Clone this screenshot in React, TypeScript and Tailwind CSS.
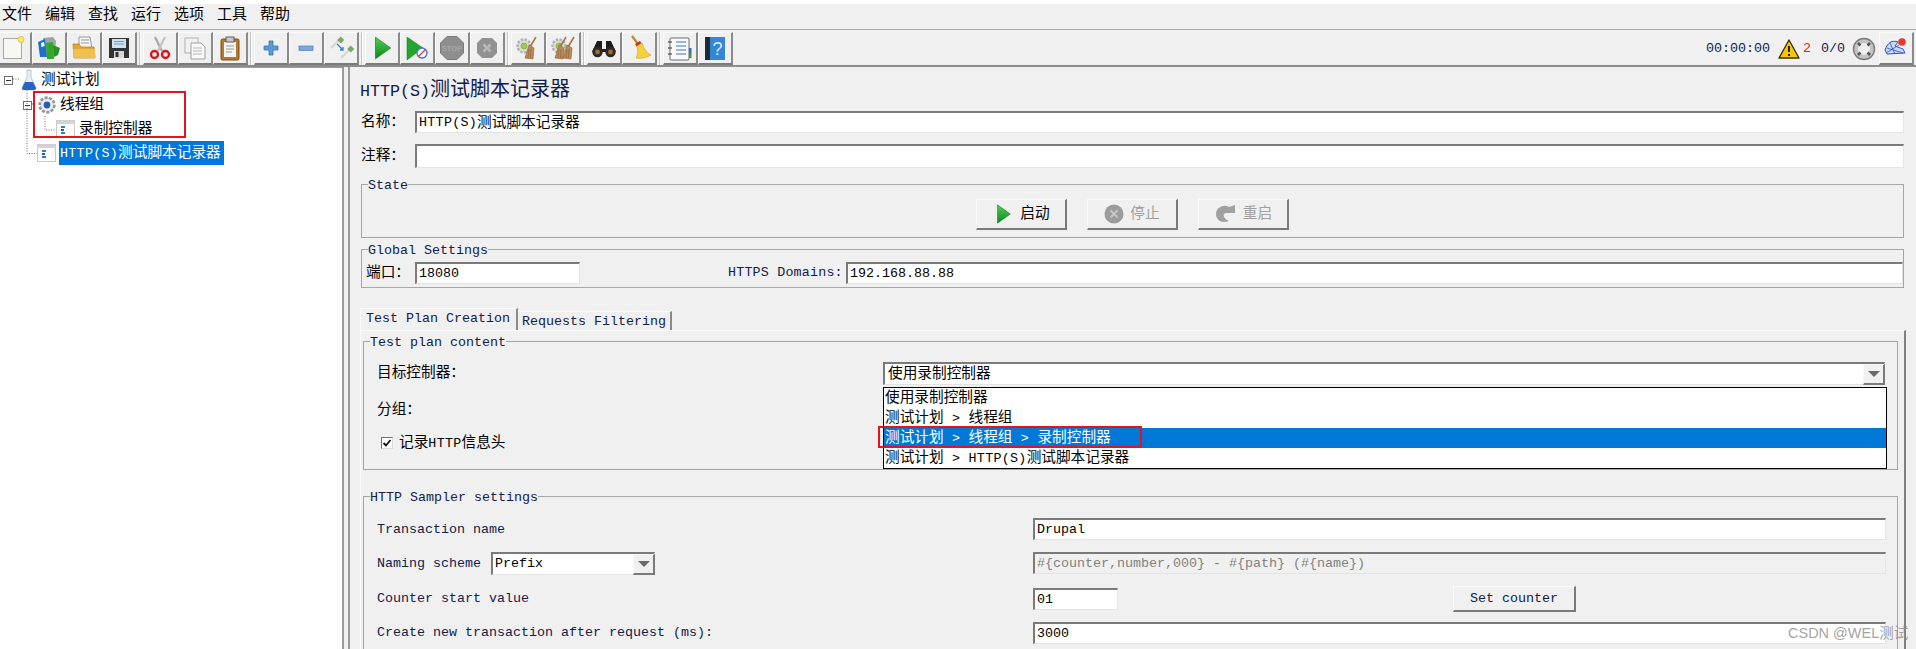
import React from "react";

const Mix = ({ text }: { text: string }) => {
  const parts = text.split(/([\u4e00-\u9fff：]+)/).filter(Boolean);
  const mixed = parts.length > 1;
  return (
    <>
      {parts.map((p, i) =>
        /[\u4e00-\u9fff：]/.test(p) ? (
          <span key={i} className="text-[14.67px]">{p}</span>
        ) : (
          <span key={i} className={"text-[13.33px] whitespace-pre " + (mixed ? "tracking-[0.3px]" : "")}>{p}</span>
        )
      )}
    </>
  );
};

const Play = ({ size = 24 }: { size?: number }) => (
  <svg width={size} height={size} viewBox="0 0 24 24">
    <defs>
      <linearGradient id="pg" x1="0" y1="0" x2="0" y2="1">
        <stop offset="0" stopColor="#4fd04f" />
        <stop offset="1" stopColor="#0b8a1e" />
      </linearGradient>
    </defs>
    <path d="M6 2 L20 12 L6 22 Z" fill="url(#pg)" stroke="#0a7a1a" strokeWidth="0.6" />
  </svg>
);

const Broom = () => (
  <g>
    <path d="M21 2 L15 12" stroke="#a5743c" strokeWidth="1.5" />
    <path d="M14 10 L19 13 L18 24 L10 23 Z" fill="#b98a5a" stroke="#8a6236" strokeWidth="0.6" />
    <path d="M14 14 L13 23 M16 14 L15.5 23" stroke="#8a6236" strokeWidth="0.6" />
  </g>
);

const GearSmall = () => (
  <g>
    <circle cx="9" cy="11" r="6.5" fill="#dcdcdc" stroke="#b0b0b0" strokeWidth="2.4" strokeDasharray="2.4 1.4" />
    <circle cx="9" cy="11" r="3" fill="#9ccc4a" stroke="#7aa030" strokeWidth="0.6" />
  </g>
);

const icons: React.ReactNode[] = [
  <svg key="new" width="26" height="26" viewBox="0 0 26 26">
    <rect x="2.5" y="3.5" width="18" height="20" fill="#f7f7f4" stroke="#a8a8a8" />
    <circle cx="20" cy="4.5" r="3" fill="#f4ea70" stroke="#e2c93a" />
  </svg>,
  <svg key="templates" width="26" height="26" viewBox="0 0 26 26">
    <path d="M7 3 L17 2 L20 6 L19 20 L9 20 Z" fill="#9aa6a8" />
    <path d="M2 7 L9 4 L11 22 L4 22 Z" fill="#1e73c8" />
    <path d="M10 8 L17 7 L18 24 L11 24 Z" fill="#35a829" />
    <path d="M17 10 L24 13 L22 20 L18 22 Z" fill="#2d8f28" />
    <path d="M5 8 L8 7 L8.6 11 L5.5 12 Z" fill="#fff" />
  </svg>,
  <svg key="open" width="26" height="26" viewBox="0 0 26 26">
    <path d="M8 2 L19 2 L21 14 L8 14 Z" fill="#f4f4f4" stroke="#9a9a9a" />
    <path d="M10 5 H18 M10 8 H18" stroke="#9a9a9a" />
    <path d="M2 9 L8 9 L10 12 L23 12 L24 23 L3 23 Z" fill="#e3a72f" stroke="#b37a1a" strokeWidth="0.7" />
    <path d="M2 14 L24 14 L24 23 L3 23 Z" fill="#f0bf50" />
  </svg>,
  <svg key="save" width="26" height="26" viewBox="0 0 26 26">
    <path d="M3 3 H23 V23 H3 Z" fill="#2f3438" />
    <rect x="6" y="4" width="14" height="9" fill="#cfe0ee" />
    <path d="M8 6.5 H18 M8 9 H18" stroke="#7c99b3" />
    <rect x="8" y="16" width="10" height="7" fill="#d8d8d8" />
    <rect x="9.5" y="17" width="3" height="5" fill="#2f3438" />
  </svg>,
  <svg key="cut" width="26" height="26" viewBox="0 0 26 26">
    <path d="M8 2 L15 16" stroke="#a9a9a9" strokeWidth="2.2" />
    <path d="M18 2 L11 16" stroke="#c2c2c2" strokeWidth="2.2" />
    <circle cx="7.5" cy="19.5" r="3.5" fill="none" stroke="#d4161c" strokeWidth="2.4" />
    <circle cx="18.5" cy="19.5" r="3.5" fill="none" stroke="#d4161c" strokeWidth="2.4" />
  </svg>,
  <svg key="copy" width="26" height="26" viewBox="0 0 26 26">
    <rect x="3" y="3" width="13" height="15" fill="#f2f2f2" stroke="#b0b0b0" />
    <path d="M9 8 H19 L23 12 V24 H9 Z" fill="#f8f8f8" stroke="#9f9f9f" />
    <path d="M11 13 H20 M11 16 H20 M11 19 H20" stroke="#b8b8b8" />
  </svg>,
  <svg key="paste" width="26" height="26" viewBox="0 0 26 26">
    <rect x="4" y="4" width="18" height="21" rx="1.5" fill="#b4772e" stroke="#7e4f16" />
    <path d="M7 7 H19 V22 H7 Z" fill="#f4f4f0" />
    <rect x="9" y="2" width="8" height="5" fill="#c8c8c8" stroke="#5f5f5f" />
    <path d="M9 11 H17 M9 14 H17 M9 17 H15" stroke="#9a9a9a" />
  </svg>,
  <svg key="plus" width="26" height="26" viewBox="0 0 26 26">
    <path d="M11 6 H15 V11 H20 V15 H15 V20 H11 V15 H6 V11 H11 Z" fill="#5b9bd8" stroke="#2e6aa8" strokeWidth="0.7" />
  </svg>,
  <svg key="minus" width="26" height="26" viewBox="0 0 26 26">
    <rect x="6" y="11" width="14" height="4.5" fill="#7fa8d6" stroke="#4d7cb0" strokeWidth="0.7" />
  </svg>,
  <svg key="toggle" width="26" height="26" viewBox="0 0 26 26">
    <path d="M3 13 L11 5" stroke="#d8d8d8" strokeWidth="2.4" />
    <rect x="10" y="2" width="5" height="5" fill="#7aa866" transform="rotate(45 12 5)" />
    <path d="M13 23 L21 15" stroke="#d8d8d8" strokeWidth="2.4" />
    <rect x="20" y="11" width="5" height="5" fill="#7aa866" transform="rotate(45 22 14)" />
    <path d="M9 9 L15 15 M15 12 V15 H12" stroke="#2f7fd8" strokeWidth="1.3" fill="none" />
  </svg>,
  <Play key="play" size={26} />,
  <svg key="playno" width="26" height="26" viewBox="0 0 26 26">
    <path d="M3 2 L19 13 L3 25 Z" fill="#24a52e" stroke="#0a7a1a" strokeWidth="0.5" />
    <circle cx="18" cy="18" r="5" fill="#fff" stroke="#3b76d4" strokeWidth="1.3" />
    <path d="M14.5 21.5 L21.5 14.5" stroke="#e0343a" strokeWidth="1.3" />
  </svg>,
  <svg key="stop" width="26" height="26" viewBox="0 0 26 26">
    <path d="M8 1.5 H18 L24.5 8 V18 L18 24.5 H8 L1.5 18 V8 Z" fill="#8e8e8e" stroke="#7a7a7a" />
    <text x="13" y="16" textAnchor="middle" fontSize="7.5" fontWeight="700" fontFamily="Liberation Sans" fill="#a8a8a8">STOP</text>
  </svg>,
  <svg key="shutdown" width="26" height="26" viewBox="0 0 26 26">
    <path d="M8 3 H18 L23 8 V18 L18 23 H8 L3 18 V8 Z" fill="#929292" />
    <path d="M9.5 9.5 L16.5 16.5 M16.5 9.5 L9.5 16.5" stroke="#b9b9b9" strokeWidth="2.6" />
  </svg>,
  <svg key="clear" width="26" height="26" viewBox="0 0 26 26">
    <GearSmall />
    <Broom />
  </svg>,
  <svg key="clearall" width="26" height="26" viewBox="0 0 26 26">
    <GearSmall />
    <g transform="translate(-5 0)"><Broom /></g>
    <g transform="translate(3 0)"><Broom /></g>
  </svg>,
  <svg key="search" width="26" height="26" viewBox="0 0 26 26">
    <path d="M6 6 H11 V14 H15 V6 H20 L25 17 H1 Z" fill="#1c1c1c" />
    <circle cx="6.5" cy="17" r="5.2" fill="#2a2a2a" />
    <circle cx="19.5" cy="17" r="5.2" fill="#2a2a2a" />
    <circle cx="6.5" cy="17" r="2.4" fill="#a8692c" />
    <circle cx="19.5" cy="17" r="2.4" fill="#a8692c" />
  </svg>,
  <svg key="broom" width="26" height="26" viewBox="0 0 26 26">
    <path d="M6 1 L12 9" stroke="#c28a2e" strokeWidth="2.4" />
    <path d="M9 9 L14 6 L16 9 L11 12 Z" fill="#d22a2a" />
    <path d="M11 11 L16 8 C18 14 21 18 25 20 C20 23 13 24 10 23 C12 20 12 15 11 11 Z" fill="#f3d23a" stroke="#c8a31c" strokeWidth="0.6" />
  </svg>,
  <svg key="fnhelp" width="26" height="26" viewBox="0 0 26 26">
    <rect x="3" y="3" width="19" height="22" rx="1" fill="#fafafa" stroke="#6a6a6a" />
    <path d="M9 7 H19 M9 11 H19 M9 15 H19 M9 19 H19" stroke="#2a74c8" strokeWidth="1.2" />
    <path d="M1 7 H5 M1 13 H5 M1 19 H5" stroke="#333" strokeWidth="1.2" />
    <rect x="22" y="13" width="2.5" height="5" fill="#2f70c0" />
    <rect x="22" y="18" width="2.5" height="5" fill="#38a030" />
  </svg>,
  <svg key="help" width="26" height="26" viewBox="0 0 26 26">
    <rect x="3" y="2" width="20" height="23" fill="#3587d4" />
    <rect x="3" y="2" width="5" height="23" fill="#1d2a38" />
    <text x="15.5" y="20" textAnchor="middle" fontSize="18" fontFamily="Liberation Sans" fill="#d8ecff">?</text>
  </svg>,
];

const ToolBtn = ({ children }: { children: React.ReactNode }) => (
  <div className="flex items-center justify-center w-[35px] h-[33px] border-t border-l border-r-2 border-b-2 border-t-[#fafafa] border-l-[#fafafa] border-r-[#8a8a8a] border-b-[#7a7a7a] bg-[#f0f0f0]">
    {children}
  </div>
);

const Sep = () => <div className="w-[2px] h-[33px] mx-[2px] bg-[#c4c4c4] border-r border-white" />;

const Toolbar = () => {
  const groups = [
    [0, 1, 2, 3],
    [4, 5, 6],
    [7, 8, 9],
    [10, 11, 12, 13],
    [14, 15],
    [16, 17],
    [18, 19],
  ];
  return (
    <div className="h-[37px] flex items-center border-b-2 border-[#8c8c8c] pt-[2px] -ml-[3px]">
      {groups.map((g, i) => (
        <React.Fragment key={i}>
          {i > 0 && <Sep />}
          {g.map((n) => (
            <ToolBtn key={n}>{icons[n]}</ToolBtn>
          ))}
        </React.Fragment>
      ))}
      <div className="ml-auto flex items-center mr-[2px] text-[13.33px] text-[#10204a]">
        <span>00:00:00</span>
        <svg width="22" height="20" viewBox="0 0 22 20" className="ml-[8px]">
          <path d="M11 1 L21 19 H1 Z" fill="#f7c600" stroke="#3b3000" strokeWidth="1.4" strokeLinejoin="round" />
          <path d="M11 7 V13 M11 15 V17" stroke="#222" strokeWidth="2" />
        </svg>
        <span className="ml-[3px] text-[#ee1c25]">2</span>
        <span className="ml-[10px]">0/0</span>
        <svg width="24" height="24" viewBox="0 0 24 24" className="ml-[7px]">
          <circle cx="12" cy="12" r="10.5" fill="#c4c4c4" stroke="#7a7a7a" strokeWidth="1.4" />
          <circle cx="12" cy="12" r="6" fill="#efefef" />
          <path d="M12 3.5 V7 M12 17 V20.5 M3.5 12 H7 M17 12 H20.5" stroke="#555" strokeWidth="2.6" transform="rotate(45 12 12)" />
        </svg>
        <div className="ml-[3px]">
          <ToolBtn>
            <svg width="26" height="24" viewBox="0 0 26 24">
              <path d="M2 14 C5 6 9 4 15 6 L12 10 L20 13 L22 17 L4 18 Z" fill="#c9d7f0" stroke="#2a56c8" strokeWidth="1" />
              <path d="M4 12 L20 17 M7 7 L12 18 M3 17 L16 9" stroke="#2a56c8" strokeWidth="0.8" />
              <circle cx="19" cy="6" r="3.8" fill="#e23b33" />
            </svg>
          </ToolBtn>
        </div>
      </div>
    </div>
  );
};

const Field = ({ value, className = "", bg = "bg-white" }: { value?: string; className?: string; bg?: string }) => (
  <div
    className={
      "flex items-center pl-[2px] border-t-2 border-l-2 border-t-[#7a7a7a] border-l-[#7a7a7a] border-b border-r border-b-[#e4e4e4] border-r-[#e4e4e4] text-black whitespace-nowrap overflow-hidden " +
      bg + " " + className
    }
  >
    {value && <Mix text={value} />}
  </div>
);

const Arrow = () => (
  <div className="w-[22px] h-full flex items-center justify-center border border-r-2 border-b-2 border-t-[#f8f8f8] border-l-[#f8f8f8] border-r-[#7a7a7a] border-b-[#7a7a7a] bg-[#f0f0f0]">
    <div className="w-0 h-0 border-l-[6px] border-r-[6px] border-t-[6px] border-l-transparent border-r-transparent border-t-[#6a6a6a]" />
  </div>
);

const Box = ({ title, className = "", children }: { title: string; className?: string; children?: React.ReactNode }) => (
  <fieldset className={"border border-[#a6a6a6] " + className}>
    <legend className="ml-[6px] h-[16px] leading-[19px] text-[#10204a] text-[13.33px] whitespace-nowrap">{title}</legend>
    {children}
  </fieldset>
);

const StateBtn = ({ icon, label, disabled }: { icon: React.ReactNode; label: string; disabled?: boolean }) => (
  <div className="w-[91px] h-[31px] flex items-center justify-center gap-[6px] border border-r-2 border-b-2 border-t-[#fafafa] border-l-[#fafafa] border-r-[#7a7a7a] border-b-[#7a7a7a]">
    {icon}
    <span className={"text-[14.67px] " + (disabled ? "text-[#a0a0a0]" : "text-black")}>{label}</span>
  </div>
);

const RedBox = ({ className }: { className: string }) => (
  <div className={"absolute border-2 border-[#e3141f] pointer-events-none " + className} />
);

const TreeDoc = () => (
  <svg width="19" height="18" viewBox="0 0 19 18">
    <rect x="0.5" y="0.5" width="18" height="17" fill="#fdfdfd" stroke="#c8c8c8" />
    <rect x="0.5" y="0.5" width="18" height="3.5" fill="#d4d4d4" />
    <path d="M5 7 H9 M5 13 H9" stroke="#3a78c8" strokeWidth="2" />
    <path d="M5 10 H8" stroke="#1f5aa8" strokeWidth="2" />
  </svg>
);

const Expander = () => (
  <div className="w-[9px] h-[9px] border border-[#707070] bg-white flex items-center justify-center">
    <div className="w-[5px] h-px bg-[#333]" />
  </div>
);

const Tree = () => (
  <div className="relative w-[344px] h-[582px] bg-white border-t border-r-2 border-[#9a9a9a] text-black">
    <svg className="absolute left-0 top-0" width="80" height="110" fill="none" stroke="#707070" strokeDasharray="1 1.5">
      <path d="M13 11 H20" />
      <path d="M27 20 V85.5 H37" />
      <path d="M32 36 H37" />
      <path d="M45 48 V62 H56" />
    </svg>
    <div className="flex items-center h-[24px] pl-[4px]">
      <Expander />
      <svg width="18" height="22" viewBox="0 0 18 22" className="ml-[7px]">
        <path d="M7 1 H11 V8 L16 19 Q16 21 14 21 H4 Q2 21 2 19 L7 8 Z" fill="#e9eef4" stroke="#9aa4ae" strokeWidth="0.6" />
        <path d="M5 13 H13 L16 19 Q16 21 14 21 H4 Q2 21 2 19 Z" fill="#2266c4" />
      </svg>
      <span className="ml-[3px] text-[14.67px]">测试计划</span>
    </div>
    <div className="flex items-center h-[24px] mt-px pl-[23px]">
      <Expander />
      <svg width="20" height="20" viewBox="0 0 20 20" className="ml-[5px]">
        <circle cx="10" cy="10" r="7.4" fill="#dfe3e8" stroke="#9098a2" strokeWidth="2.6" strokeDasharray="3 1.6" />
        <circle cx="10" cy="10" r="5.5" fill="#eef0f3" />
        <circle cx="10" cy="10" r="3.4" fill="#2c5cb0" />
      </svg>
      <span className="ml-[3px] text-[14.67px]">线程组</span>
    </div>
    <div className="flex items-center h-[24px] pl-[56px]">
      <TreeDoc />
      <span className="ml-[4px] text-[14.67px]">录制控制器</span>
    </div>
    <div className="flex items-center h-[24px] pl-[37px]">
      <TreeDoc />
      <span className="ml-[3px] h-[24px] w-[165px] pl-[1px] leading-[24px] bg-[#0078d7] text-white whitespace-nowrap">
        <Mix text="HTTP(S)测试脚本记录器" />
      </span>
    </div>
    <RedBox className="left-[33px] top-[23px] w-[153px] h-[47px]" />
  </div>
);

const PopupRow = ({ text, selected }: { text: string; selected?: boolean }) => (
  <div className={"h-[20px] leading-[20px] pl-[1px] whitespace-nowrap " + (selected ? "bg-[#0078d7] text-white" : "text-black")}>
    <Mix text={text} />
  </div>
);

const TargetCombo = () => (
  <div className="relative w-[1002px] h-[23px] flex">
    <Field value="使用录制控制器" className="flex-1 pl-[3px]" />
    <div className="absolute right-0 top-[2px] h-[21px]">
      <Arrow />
    </div>
    <div className="absolute left-0 top-[25px] w-[1004px] h-[82px] z-10 bg-white border border-black">
      <PopupRow text="使用录制控制器" />
      <PopupRow text="测试计划 > 线程组" />
      <PopupRow text="测试计划 > 线程组 > 录制控制器" selected />
      <PopupRow text="测试计划 > HTTP(S)测试脚本记录器" />
      <RedBox className="-left-[6px] top-[38px] w-[264px] h-[22px]" />
    </div>
  </div>
);

const RightPane = () => (
  <div className="flex-1 h-[582px] ml-[4px] pl-[11px] pr-[12px] border-l-2 border-[#9a9a9a] text-black">
    <div className="mt-[12px] -ml-[1px] h-[24px] leading-[24px] whitespace-nowrap text-[#10204a]">
      <span className="text-[16.67px]">HTTP(S)</span>
      <span className="text-[20px]">测试脚本记录器</span>
    </div>
    <div className="mt-[8px] flex h-[22px]">
      <span className="w-[54px] text-[14.67px] leading-[22px]">名称：</span>
      <Field value="HTTP(S)测试脚本记录器" className="flex-1" />
    </div>
    <div className="mt-[11px] flex h-[24px]">
      <span className="w-[54px] text-[14.67px] leading-[24px]">注释：</span>
      <Field className="flex-1" />
    </div>
    <Box title="State" className="mt-[8px] h-[62px]">
      <div className="flex gap-[20px] ml-[614px] mt-[7px]">
        <StateBtn label="启动" icon={<Play size={22} />} />
        <StateBtn
          label="停止"
          disabled
          icon={
            <svg width="20" height="20" viewBox="0 0 20 20">
              <circle cx="10" cy="10" r="9.5" fill="#9c9c9c" />
              <path d="M6.5 6.5 L13.5 13.5 M13.5 6.5 L6.5 13.5" stroke="#c4c4c4" strokeWidth="2" />
            </svg>
          }
        />
        <StateBtn
          label="重启"
          disabled
          icon={
            <svg width="23" height="20" viewBox="0 0 23 20">
              <path d="M21 1 V9 H13 C10 9 9 11 10 13 C11 15 13 16 15 17 C8 20 2 16 2 10 C2 4 8 1 13 2 L15 3 L21 1 Z" fill="#a0a0a0" />
            </svg>
          }
        />
      </div>
    </Box>
    <Box title="Global Settings" className="mt-[3px] h-[47px]">
      <div className="flex h-[22px] mt-[5px] pl-[4px] text-[#10204a]">
        <span className="w-[49px] text-[14.67px] leading-[22px] text-black">端口：</span>
        <Field value="18080" className="w-[165px]" />
        <span className="ml-[148px] w-[118px] text-[13.33px] tracking-[0.2px] leading-[22px] whitespace-nowrap">HTTPS Domains:</span>
        <Field value="192.168.88.88" className="flex-1" />
      </div>
    </Box>
    <div className="mt-[20px] -ml-[1px] flex items-end h-[22px] text-[#10204a] text-[13.33px]">
      <div className="w-[158px] h-[22px] leading-[20px] pl-[5px] border-t border-l border-r-2 border-t-[#fafafa] border-l-[#fafafa] border-r-[#8a8a8a]">
        Test Plan Creation
      </div>
      <div className="w-[154px] h-[19px] leading-[19px] pl-[4px] border-t border-r-2 border-t-[#fafafa] border-r-[#8a8a8a]">
        Requests Filtering
      </div>
    </div>
    <div className="-ml-[1px] -mr-[2px] pl-[2px] pr-[6px] h-[400px] border-t border-l border-t-[#fafafa] border-l-[#fafafa] border-r-2 border-r-[#808080]">
      <Box title="Test plan content" className="mt-[2px] h-[137px]">
        <div className="flex pl-[13px] pt-[13px]">
          <span className="w-[506px] text-[14.67px] leading-[23px]">目标控制器：</span>
          <TargetCombo />
        </div>
        <div className="mt-[14px] pl-[13px] h-[22px] text-[14.67px] leading-[22px]">分组：</div>
        <div className="mt-[12px] pl-[17px] h-[20px] flex items-center whitespace-nowrap">
          <div className="w-[12px] h-[12px] bg-white border border-t-[#707070] border-l-[#707070] border-b-[#dcdcdc] border-r-[#dcdcdc] flex items-center justify-center">
            <svg width="10" height="10" viewBox="0 0 10 10">
              <path d="M1.5 5 L4 7.5 L8.5 2" fill="none" stroke="#111" strokeWidth="1.8" />
            </svg>
          </div>
          <span className="ml-[6px]"><Mix text="记录HTTP信息头" /></span>
        </div>
      </Box>
      <Box title="HTTP Sampler settings" className="mt-[18px] h-[300px]">
        <div className="pl-[13px] pr-[11px] text-[13.33px] text-[#10204a]">
          <div className="flex h-[22px] mt-[14px]">
            <span className="w-[656px] leading-[24px]">Transaction name</span>
            <Field value="Drupal" className="flex-1" />
          </div>
          <div className="flex h-[22px] mt-[12px]">
            <div className="w-[656px] flex leading-[24px]">
              <span className="w-[114px]">Naming scheme</span>
              <div className="w-[164px] h-[23px] flex relative">
                <Field value="Prefix" className="flex-1" />
                <div className="absolute right-0 top-[2px] h-[21px]">
                  <Arrow />
                </div>
              </div>
            </div>
            <Field value="#{counter,number,000} - #{path} (#{name})" bg="bg-[#f0f0f0]" className="flex-1 !text-[#808080]" />
          </div>
          <div className="flex items-center h-[26px] mt-[12px]">
            <span className="w-[656px]">Counter start value</span>
            <Field value="01" className="w-[85px] h-[22px]" />
            <div className="ml-[335px] w-[123px] h-[26px] leading-[24px] text-center border border-r-2 border-b-2 border-t-[#fafafa] border-l-[#fafafa] border-r-[#7a7a7a] border-b-[#7a7a7a]">
              Set counter
            </div>
          </div>
          <div className="flex h-[22px] mt-[10px]">
            <span className="w-[656px] leading-[22px]">Create new transaction after request (ms):</span>
            <Field value="3000" className="flex-1" />
          </div>
        </div>
      </Box>
    </div>
  </div>
);

export default function App() {
  const menus = ["文件", "编辑", "查找", "运行", "选项", "工具", "帮助"];
  return (
    <div className="relative w-[1916px] h-[649px] overflow-hidden bg-[#f0f0f0] font-['Liberation_Mono','Noto_Sans_CJK_SC',monospace]">
      <div className="h-[4px] bg-white" />
      <div className="h-[26px] flex items-center gap-[13px] pl-[2px] border-b border-[#a8a8a8] text-[15px] text-black">
        {menus.map((m) => (
          <span key={m}>{m}</span>
        ))}
      </div>
      <Toolbar />
      <div className="flex">
        <Tree />
        <RightPane />
      </div>
      <div className="absolute left-[1788px] top-[623px] z-20 text-[14.5px] text-[#8a8a8a]/80 whitespace-nowrap font-['Liberation_Sans','Noto_Sans_CJK_SC',sans-serif]">
        CSDN @WEL测试
      </div>
    </div>
  );
}
